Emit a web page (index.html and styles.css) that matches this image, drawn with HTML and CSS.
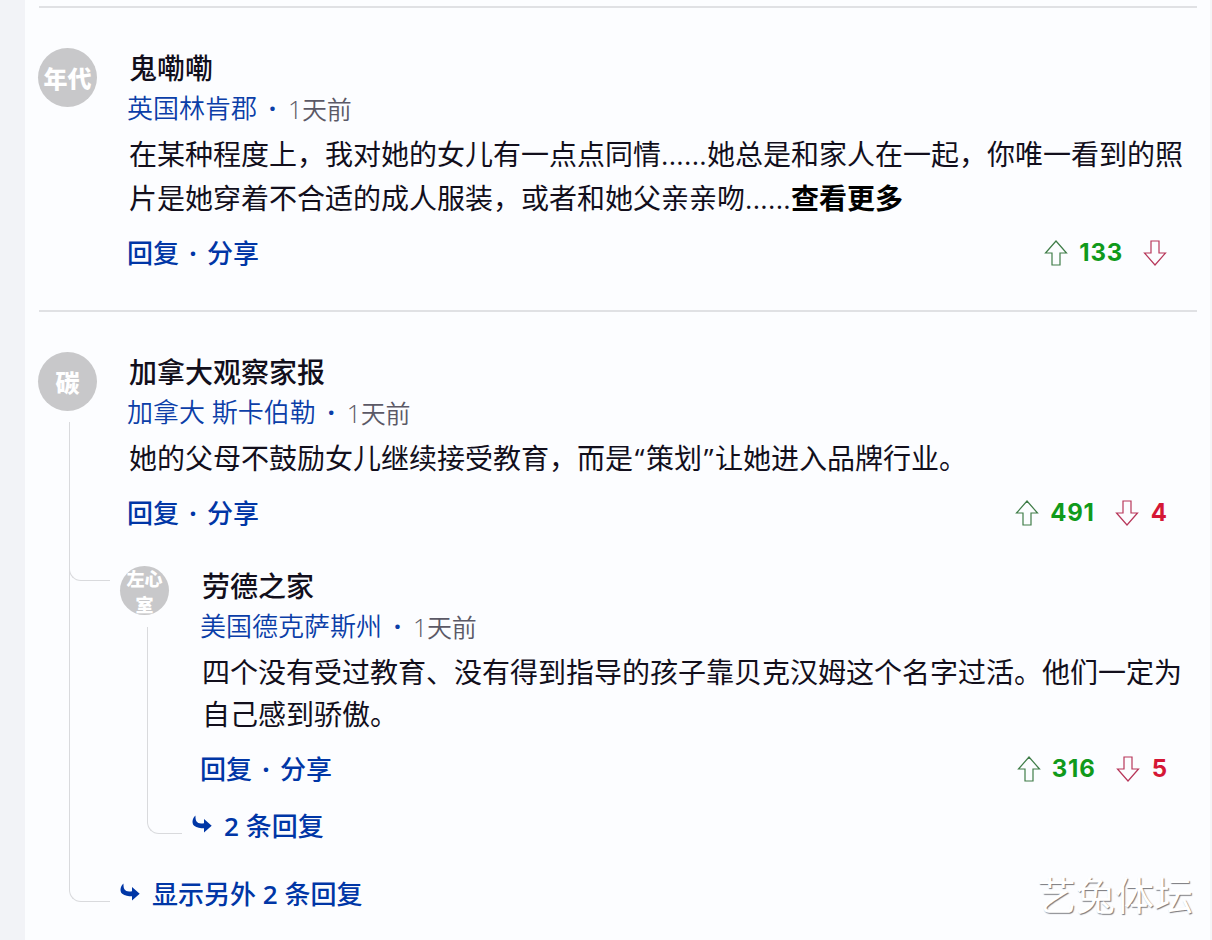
FILE: index.html
```html
<!DOCTYPE html>
<html lang="zh-CN">
<head>
  <meta charset="UTF-8">
  <meta name="viewport" content="width=device-width, initial-scale=1.0">
  <title>评论</title>
  <link rel="stylesheet" href="styles.css">
</head>
<body>
  <svg class="symbols" width="0" height="0">
    <symbol id="arrow-up" viewBox="0 0 24 26">
      <path d="M12 1 L22.5 13 H16 V25 H8 V13 H1.5 Z"/>
    </symbol>
    <symbol id="arrow-down" viewBox="0 0 24 26">
      <path d="M12 25 L22.5 13 H16 V1 H8 V13 H1.5 Z"/>
    </symbol>
    <symbol id="arrow-reply" viewBox="0 0 20 18">
      <path d="M3.5 .5 C.5 3 -.8 8 2.2 10.8 C4.7 13 8.5 13.3 12 13.3 V17.6 L19.7 10.8 L12 4 V8.2 C8 8.8 5.8 8.3 4.6 6.5 C3.6 5 3.4 2.5 3.5 .5 Z"/>
    </symbol>
  </svg>

  <main class="comments">
    <article class="comment first">
      <div class="avatar">年代</div>
      <div class="content">
        <h3 class="name">鬼嘞嘞</h3>
        <p class="meta"><a>英国林肯郡</a><span class="dot">·</span><time>1天前</time></p>
        <p class="text">在某种程度上，我对她的女儿有一点点同情<span class="ellipsis">......</span>她总是和家人在一起，你唯一看到的照<br>片是她穿着不合适的成人服装，或者和她父亲亲吻<span class="ellipsis">......</span><b>查看更多</b></p>
        <div class="actions">
          <div class="links"><a>回复</a><span>·</span><a>分享</a></div>
          <div class="votes">
            <svg class="up"><use href="#arrow-up"/></svg>
            <span class="likes">133</span>
            <svg class="down"><use href="#arrow-down"/></svg>
          </div>
        </div>
      </div>
    </article>

    <article class="comment thread">
      <div class="avatar">碳</div>
      <div class="content">
        <h3 class="name">加拿大观察家报</h3>
        <p class="meta"><a>加拿大 斯卡伯勒</a><span class="dot">·</span><time>1天前</time></p>
        <p class="text">她的父母不鼓励女儿继续接受教育，而是<span class="quote">“</span>策划<span class="quote">”</span>让她进入品牌行业。</p>
        <div class="actions">
          <div class="links"><a>回复</a><span>·</span><a>分享</a></div>
          <div class="votes">
            <svg class="up"><use href="#arrow-up"/></svg>
            <span class="likes">491</span>
            <svg class="down"><use href="#arrow-down"/></svg>
            <span class="dislikes">4</span>
          </div>
        </div>
      </div>
    </article>

    <section class="replies">
      <article class="comment reply">
        <div class="avatar small">左心<br>室</div>
        <div class="content">
          <h3 class="name">劳德之家</h3>
          <p class="meta"><a>美国德克萨斯州</a><span class="dot">·</span><time>1天前</time></p>
          <p class="text">四个没有受过教育、没有得到指导的孩子靠贝克汉姆这个名字过活。他们一定为<br>自己感到骄傲。</p>
          <div class="actions">
            <div class="links"><a>回复</a><span>·</span><a>分享</a></div>
            <div class="votes">
              <svg class="up"><use href="#arrow-up"/></svg>
              <span class="likes">316</span>
              <svg class="down"><use href="#arrow-down"/></svg>
              <span class="dislikes">5</span>
            </div>
          </div>
        </div>
      </article>
      <a class="more inner"><svg><use href="#arrow-reply"/></svg><span><b>2</b> 条回复</span></a>
      <a class="more"><svg><use href="#arrow-reply"/></svg><span>显示另外 <b>2</b> 条回复</span></a>
    </section>
  </main>

  <div class="watermark">艺兔体坛</div>
</body>
</html>
```

FILE: styles.css
```css
* { box-sizing: border-box; }
body {
  margin: 0;
  height: 940px;
  overflow: hidden;
  position: relative;
  border-left: 25px solid #f2f3f7;
  border-right: 2px solid #f5f5f7;
  background: #fcfdff;
  color: #120f1c;
  font-family: "Open Sans", "Noto Sans CJK SC", sans-serif;
}
h3, p { margin: 0; }
.symbols { position: absolute; }
.comments { width: 1158px; margin: 6px 0 0 14px; border-top: 2px solid #e0e1e4; }

.comment { display: flex; gap: 31px; padding-top: 40px; }
.comment.first { height: 304px; border-bottom: 2px solid #e0e1e4; }
.avatar {
  flex: none;
  width: 59px;
  height: 59px;
  margin-left: -1px;
  border-radius: 50%;
  background: #c8c8ca;
  color: #fff;
  font-size: 24px;
  font-weight: 900;
  line-height: 61px;
  text-align: center;
}
.avatar.small { width: 49px; height: 49px; margin-left: 0; font-size: 18px; line-height: 26px; }
.avatar + .content { margin-left: 1px; }
.content { flex: 1; white-space: nowrap; }
.name { font-size: 28px; font-weight: 500; line-height: 40px; }
.meta { display: flex; margin-left: -2px; font-size: 26px; line-height: 40px; color: #0b3ea8; font-weight: 350; }
.meta .dot { width: 31px; text-align: center; font-weight: 700; }
.meta time { color: #5b5966; font-size: 25px; line-height: 42px; height: 40px; letter-spacing: -0.3px; }
.text { margin-top: 4px; font-size: 28px; line-height: 44px; }
.text b { color: #000; }
.ellipsis { letter-spacing: 0.3px; }
.quote { display: inline-block; width: 13px; text-align: center; }

.actions { display: flex; justify-content: space-between; margin-top: 13px; height: 40px; padding-right: 30px; }
.links { display: flex; margin-left: -2px; font-size: 26px; line-height: 40px; font-weight: 500; color: #0036a6; }
.links span { width: 28px; text-align: center; font-weight: 700; }
.votes { display: flex; align-items: center; font: 700 24px/40px Inter, sans-serif; }
.votes svg { width: 24px; height: 26px; fill: none; stroke-width: 1.2; }
.up { stroke: #3f7d48; }
.down { stroke: #b7375a; margin-left: 20px; }
.likes { color: #109a1b; margin-left: 11px; letter-spacing: 0.8px; }
.dislikes { color: #d51735; margin-left: 12px; }

/* thread connectors */
.thread { position: relative; }
.thread::before, .thread::after, .reply::before {
  content: "";
  position: absolute;
  border: solid #d9dadd;
  border-width: 0 0 1px 1px;
  border-radius: 0 0 0 12px;
}
.thread::before { left: 30px; top: 110px; width: 40px; height: 479px; }
.thread::after { left: 30px; top: 110px; width: 40px; height: 158px; }
.reply::before { left: 27px; top: 61px; width: 34px; height: 206px; }

.replies { margin-left: 81px; padding-top: 33px; }
.reply { position: relative; gap: 32px; padding-top: 0; }
.reply .text { line-height: 42px; margin-top: 5px; }
.reply .actions { margin-top: 14px; }
.more { display: flex; align-items: center; gap: 12px; height: 40px; margin-top: 28px; font-size: 26px; font-weight: 500; line-height: 40px; color: #0036a6; white-space: nowrap; }
.more b { font-weight: 600; }
.more svg { width: 20px; height: 18px; margin-bottom: 5px; fill: #0036a6; }
.more.inner { margin: 17px 0 0 72px; }

.watermark {
  position: absolute;
  right: 17px;
  bottom: 17px;
  font-size: 39px;
  line-height: 56px;
  color: #fff;
  text-shadow: 1px 1px 1px #77777c;
}
```
